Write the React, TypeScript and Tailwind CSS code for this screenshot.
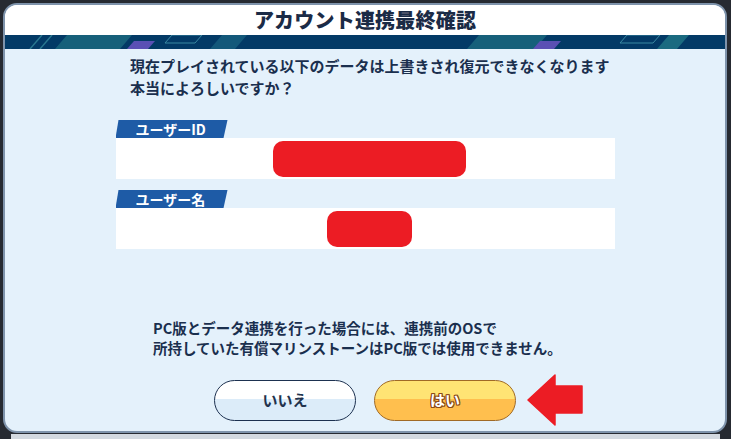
const FONT = '"Noto Sans CJK JP", "Noto Sans", sans-serif';

// Decorative band under the title: navy bar with slanted teal/purple bits
function TitleBand() {
  return (
    <svg className="block h-[14px] w-full" viewBox="0 0 720 14" preserveAspectRatio="none">
      <rect width="720" height="14" fill="#033a66" />
      <line x1="25" y1="14" x2="37" y2="0" stroke="#2a7890" strokeWidth="1.4" />
      <line x1="35" y1="14" x2="47" y2="0" stroke="#2a7890" strokeWidth="1.4" />
      <polygon points="50,14 115,14 127,0 62,0" fill="#16607a" />
      <polygon points="122,14 143,14 150,6 129,6" fill="#5a50b4" />
      <polygon points="160,8 190,8 197,0 167,0" fill="none" stroke="#3b88a2" strokeWidth="1" />
      <polygon points="205,14 230,14 242,0 217,0" fill="#13587a" />
      <polygon points="462,14 530,14 542,0 474,0" fill="#16607a" />
      <polygon points="528,14 549,14 556,6 535,6" fill="#5a50b4" />
      <polygon points="615,8 648,8 655,0 622,0" fill="none" stroke="#3b88a2" strokeWidth="1" />
      <polygon points="652,14 672,14 684,0 664,0" fill="#1a6a80" />
    </svg>
  );
}

interface FieldProps {
  label: string;
  blobWidth: string;
}

function Field({ label, blobWidth }: FieldProps) {
  return (
    <div className="mx-auto w-[499px]">
      <div className="flex h-[18px] w-[112px] items-center bg-[#1e5ba6] pl-[20px] [clip-path:polygon(3px_0,100%_0,calc(100%_-_4px)_100%,0_100%)]">
        <span className="text-[14px] leading-none font-bold text-white">{label}</span>
      </div>
      <div className="flex h-[41px] items-center justify-center bg-white pl-[9px]">
        <div className={`h-[36px] rounded-[10px] bg-[#ec1c24] ${blobWidth}`} />
      </div>
    </div>
  );
}

function PointerArrow() {
  return (
    <svg className="absolute top-[-6px] left-[calc(100%+11px)] h-[52px] w-[56px]" viewBox="0 0 56 52">
      <polygon
        points="1,26 28,1 28,12 55,12 55,39 28,39 28,51"
        fill="#ec1c24"
        stroke="#ec1c24"
        strokeWidth="1.5"
        strokeLinejoin="round"
      />
    </svg>
  );
}

export default function App() {
  return (
    <div className="flex h-[439px] w-[731px] flex-col bg-[#262a31] px-[3px] pt-[3px]" style={{ fontFamily: FONT }}>
      <div className="h-[430px] w-[724px] overflow-hidden rounded-[14px] border-2 border-[#7e93ab] bg-[#e4f1fb]">
        {/* Title */}
        <div className="flex h-[30px] items-center justify-center bg-white">
          <h1 className="text-[20px] leading-none font-black tracking-[0.2px] text-[#1b2b46]">アカウント連携最終確認</h1>
        </div>
        <TitleBand />

        {/* Body */}
        <div className="flex flex-col pt-[6px] text-[#1a2f4e]">
          <div className="pl-[125px] text-[15px] leading-[22px] font-bold whitespace-nowrap">
            <p>現在プレイされている以下のデータは上書きされ復元できなくなります</p>
            <p>本当によろしいですか？</p>
          </div>

          <div className="mt-[21px]">
            <Field label="ユーザーID" blobWidth="w-[193px]" />
          </div>
          <div className="mt-[11px]">
            <Field label="ユーザー名" blobWidth="w-[85px]" />
          </div>

          <div className="mt-[69px] pl-[148px] text-[14.5px] leading-[20px] font-bold whitespace-nowrap">
            <p>PC版とデータ連携を行った場合には、連携前のOSで</p>
            <p>所持していた有償マリンストーンはPC版では使用できません。</p>
          </div>

          {/* Buttons */}
          <div className="mt-[22px] flex justify-center gap-[18px]">
            <button className="h-[41px] w-[142px] rounded-full border-[1.5px] border-[#1d3150] bg-[linear-gradient(to_bottom,#ffffff_0%,#ffffff_45%,#dcecf9_45%,#dcecf9_100%)] text-[15px] font-bold text-[#22324d]">
              いいえ
            </button>
            <div className="relative">
              <button className="h-[41px] w-[142px] rounded-full border-[1.5px] border-[#a06a26] bg-[linear-gradient(to_bottom,#ffe474_0%,#ffe474_45%,#ffbf4e_45%,#ffbf4e_100%)] text-[15px] font-bold text-white [text-shadow:1px_0_0_#8b4a14,-1px_0_0_#8b4a14,0_1px_0_#8b4a14,0_-1px_0_#8b4a14,1px_1px_0_#8b4a14,-1px_-1px_0_#8b4a14,1px_-1px_0_#8b4a14,-1px_1px_0_#8b4a14]">
                はい
              </button>
              <PointerArrow />
            </div>
          </div>
        </div>
      </div>
      <div className="mx-[8px] mt-[1px] h-[5px] bg-[#d3d9e0]" />
    </div>
  );
}
